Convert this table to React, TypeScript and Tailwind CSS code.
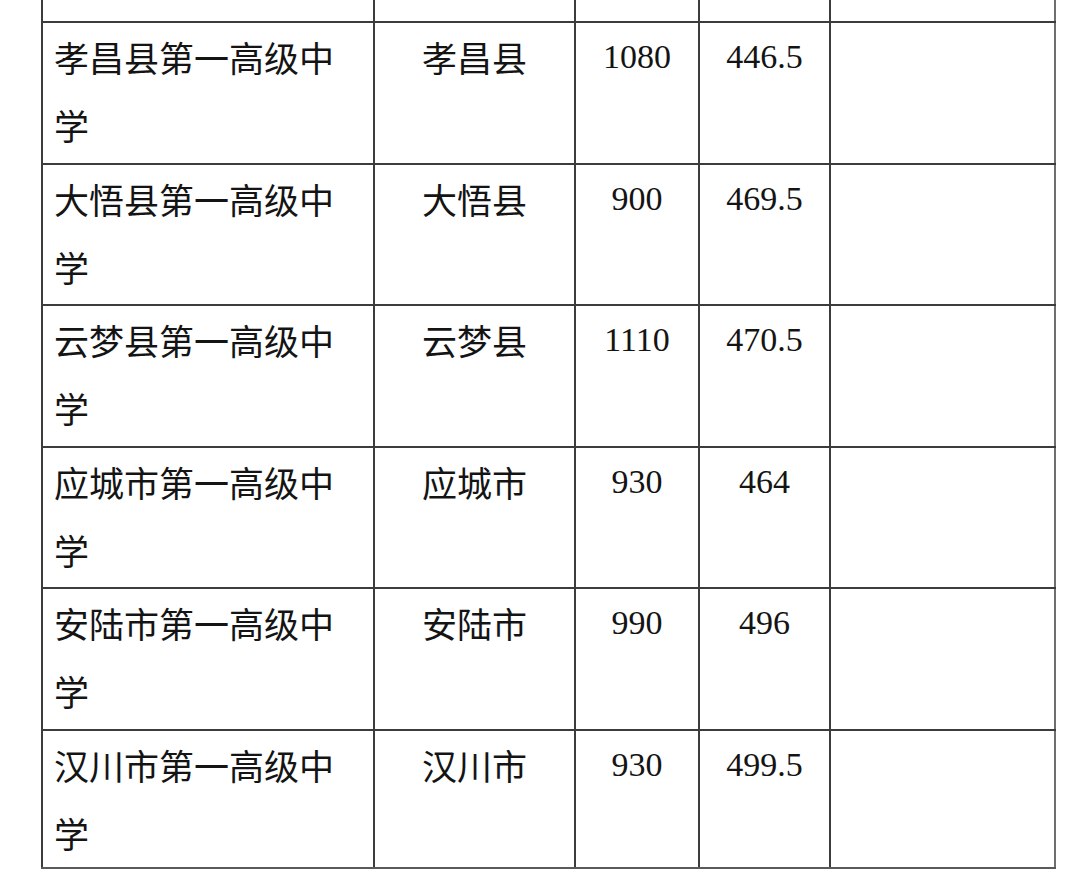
import React from "react";

interface SchoolRow {
  school: string;
  county: string;
  plan: string;
  score: string;
  h: string;
}

const rows: SchoolRow[] = [
  { school: "孝昌县第一高级中学", county: "孝昌县", plan: "1080", score: "446.5", h: "h-[142px]" },
  { school: "大悟县第一高级中学", county: "大悟县", plan: "900", score: "469.5", h: "h-[141px]" },
  { school: "云梦县第一高级中学", county: "云梦县", plan: "1110", score: "470.5", h: "h-[142px]" },
  { school: "应城市第一高级中学", county: "应城市", plan: "930", score: "464", h: "h-[141px]" },
  { school: "安陆市第一高级中学", county: "安陆市", plan: "990", score: "496", h: "h-[142px]" },
  { school: "汉川市第一高级中学", county: "汉川市", plan: "930", score: "499.5", h: "h-[140px]" },
];

const cols = "grid grid-cols-[332px_201px_124px_131px_227px]";
const cjk = { fontFamily: '"Noto Sans CJK SC", "Noto Sans", sans-serif' };
const serif = { fontFamily: '"Liberation Serif", "Noto Sans CJK SC", serif' };

const App = () => {
  return (
    <div className="w-[1080px] h-[884px] bg-white overflow-hidden text-[#141414]">
      <div className="ml-[41px] w-[1015px]">
        {/* cut-off row above */}
        <div className={`${cols} h-[21px]`}>
          <div className="border-l-2 border-[#3c3c3c]" />
          <div className="border-l-2 border-[#3c3c3c]" />
          <div className="border-l-2 border-[#3c3c3c]" />
          <div className="border-l-2 border-[#3c3c3c]" />
          <div className="border-l-2 border-r-2 border-l-[#3c3c3c] border-r-[#6e6e6e]" />
        </div>

        {rows.map((r, i) => (
          <div
            key={i}
            className={`${cols} ${r.h} border-t-2 border-[#3c3c3c] ${i === rows.length - 1 ? "border-b-2 border-b-[#5a5a5a]" : ""}`}
          >
            <div className="border-l-2 border-[#3c3c3c] pl-[11px]">
              <div className="max-w-[300px] text-[35px] leading-[68px]" style={cjk}>
                {r.school}
              </div>
            </div>
            <div className="border-l-2 border-[#3c3c3c] text-center text-[35px] leading-[68px]" style={cjk}>
              {r.county}
            </div>
            <div className="border-l-2 border-[#3c3c3c] text-center text-[34px] leading-[68px]" style={serif}>
              {r.plan}
            </div>
            <div className="border-l-2 border-[#3c3c3c] text-center text-[34px] leading-[68px]" style={serif}>
              {r.score}
            </div>
            <div className="border-l-2 border-r-2 border-l-[#3c3c3c] border-r-[#6e6e6e]" />
          </div>
        ))}
      </div>
    </div>
  );
};

export default App;
